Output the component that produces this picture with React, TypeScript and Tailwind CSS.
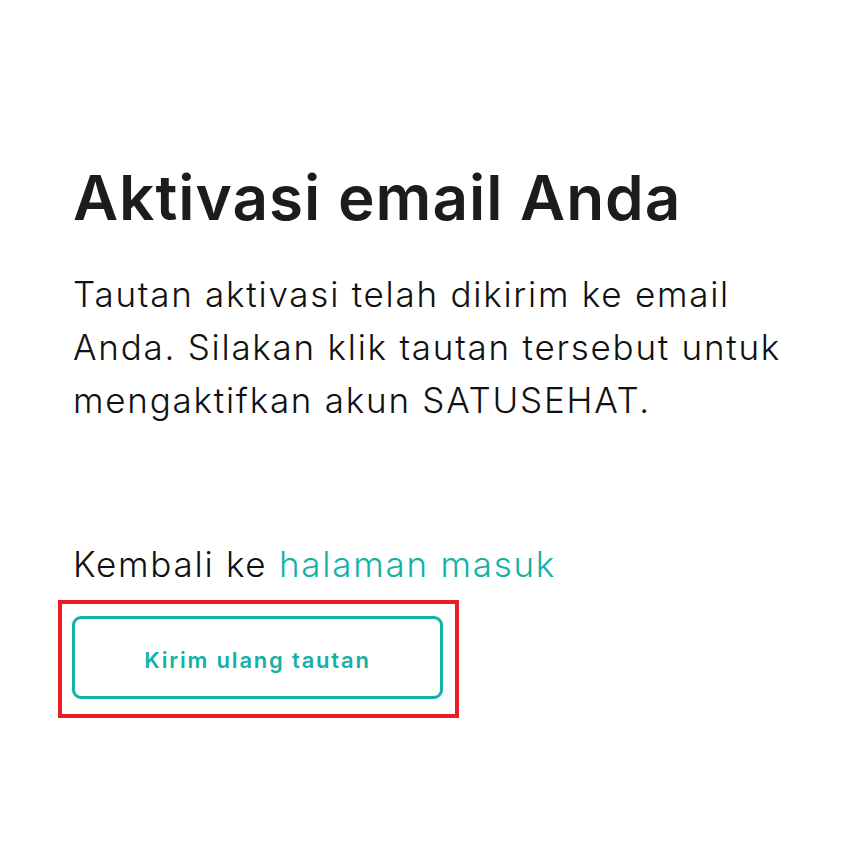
export default function App() {
  return (
    <div className="min-h-screen bg-white font-['Inter',sans-serif] text-[#1a1a1a]">
      <div className="px-[73px] pt-[162px]">
        <h1 className="text-[62px] font-semibold leading-[72px] tracking-[1px] text-[#1c1c1c]">
          Aktivasi email Anda
        </h1>
        <p className="mt-[34px] text-[35px] font-light leading-[53px] tracking-[1.75px] text-[#111]">
          Tautan aktivasi telah dikirim ke email Anda. Silakan klik tautan
          tersebut untuk mengaktifkan akun SATUSEHAT.
        </p>
        <p className="mt-[111px] text-[35px] font-light leading-[53px] tracking-[1.75px] text-[#111]">
          Kembali ke{" "}
          <a href="#" className="text-[#14b1a6]">
            halaman masuk
          </a>
        </p>
        <div className="mt-[9px] -ml-[15px] w-fit border-4 border-[#ed1c24] pl-[10px] pr-[12px] pt-[12px] pb-[15px]">
          <button className="flex h-[83px] w-[371px] items-center justify-center rounded-[9px] border-[3px] border-[#14b1a6] bg-white pt-[6px] text-[22px] font-semibold tracking-[1.8px] text-[#14b1a6]">
            Kirim ulang tautan
          </button>
        </div>
      </div>
    </div>
  );
}
